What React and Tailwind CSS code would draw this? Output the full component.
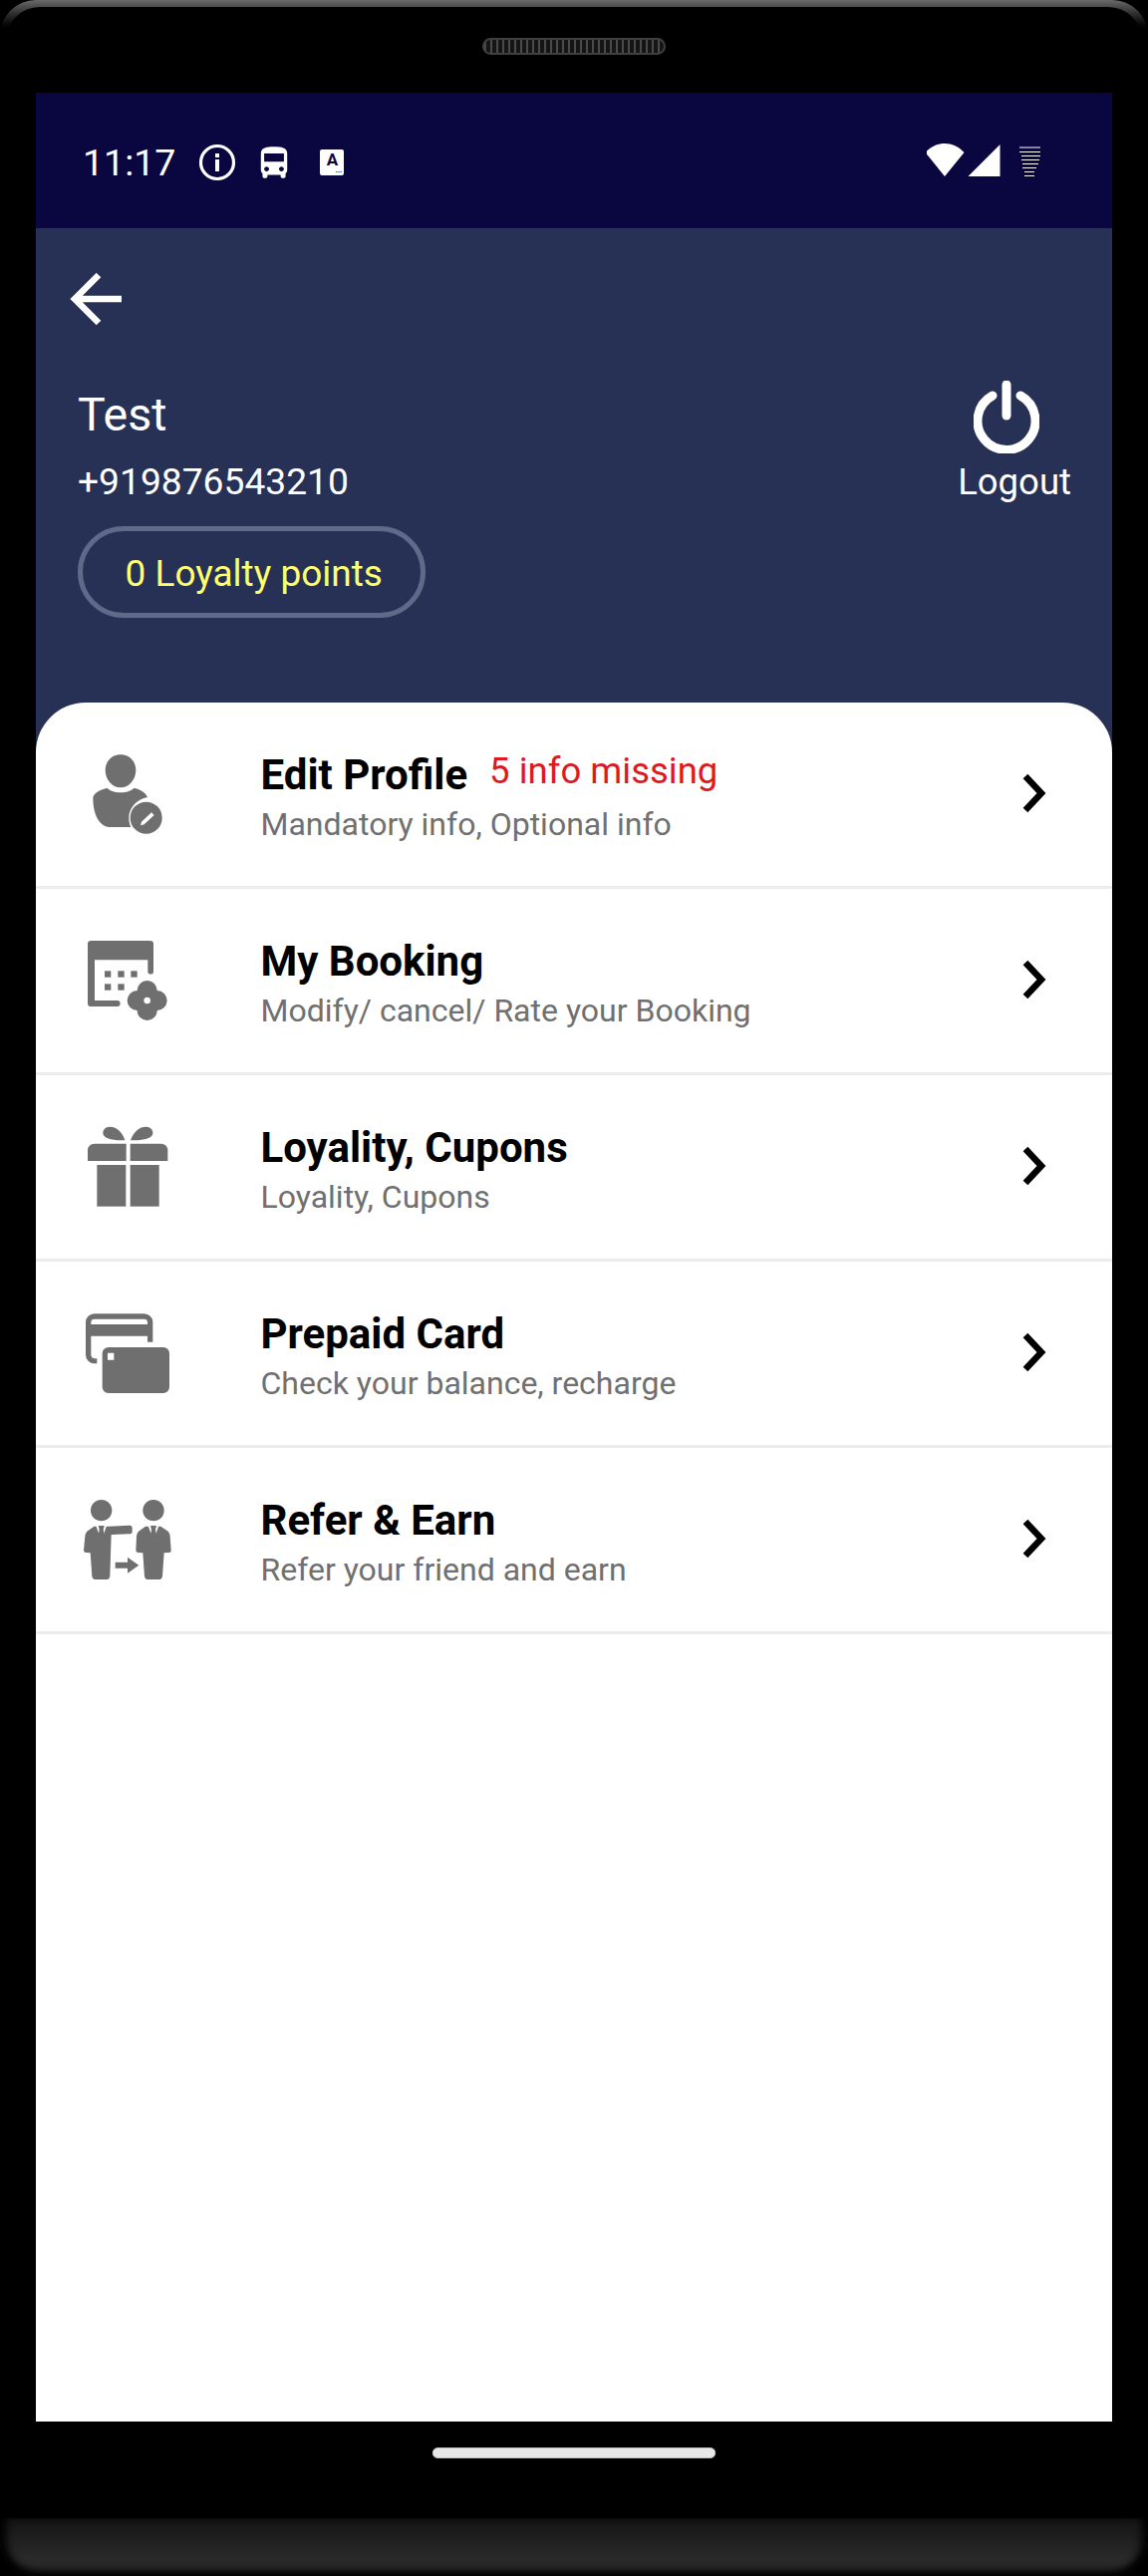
const font = { fontFamily: 'Roboto, sans-serif' };

function PersonIcon() {
  return (
    <svg width="140" height="140" viewBox="0 0 420 420" className="shrink-0">
      <g transform="translate(0 9)" fill="#6f6f6f">
        <path d="M183 82c27 0 46 20 46 47 0 27-20 52-46 52s-46-25-46-52c0-27 19-47 46-47z" />
        <path d="M100 212c2-14 16-22 42-30 8 8 24 14 41 14s33-6 41-14c20 6 34 13 40 28-30 6-56 30-56 62 0 10 2 20 6 28h-62c-30 0-52-34-52-88z" />
        <circle cx="260" cy="272" r="48" />
        <path d="M246 284l30-28 8 8-30 28-11 3z" fill="#fff" />
      </g>
    </svg>
  );
}

function CalendarIcon() {
  return (
    <svg width="140" height="140" viewBox="0 0 420 420" className="shrink-0">
      <g transform="translate(0 18)" fill="#6f6f6f">
        <path d="M94 72h178a10 10 0 0 1 10 10v82a8 8 0 0 1-17 0v-34H105v122h68a9 9 0 0 1 0 18H94a10 10 0 0 1-10-10V82a10 10 0 0 1 10-10z" />
        <rect x="135" y="163" width="19" height="19" />
        <rect x="175" y="163" width="19" height="19" />
        <rect x="214" y="163" width="19" height="19" />
        <rect x="135" y="202" width="19" height="19" />
        <rect x="175" y="202" width="19" height="19" />
        <circle cx="263" cy="222" r="30" />
        <circle cx="263" cy="282" r="30" />
        <circle cx="233" cy="252" r="30" />
        <circle cx="293" cy="252" r="30" />
        <rect x="235" y="224" width="56" height="56" />
        <circle cx="263" cy="252" r="10" fill="#fff" />
      </g>
    </svg>
  );
}

function GiftIcon() {
  return (
    <svg width="140" height="140" viewBox="0 0 420 420" className="shrink-0">
      <g transform="translate(0 27)" fill="#6f6f6f">
        <path d="M196 103C188 76 170 62 150 62C135 62 127 75 131 86C137 100 165 103 196 103z" />
        <path d="M213 103C222 76 240 62 260 62C275 62 283 75 279 86C273 100 244 103 213 103z" />
        <path d="M104 113h96v52H84v-32a20 20 0 0 1 20-20z" />
        <path d="M212 113h93a20 20 0 0 1 20 20v32H212z" />
        <rect x="112" y="177" width="87" height="125" />
        <rect x="212" y="177" width="87" height="125" />
      </g>
    </svg>
  );
}

function CardIcon() {
  return (
    <svg width="140" height="140" viewBox="0 0 420 420" className="shrink-0">
      <g transform="translate(0 36)" fill="#6f6f6f">
        <path d="M104 55h150a26 26 0 0 1 26 26v59h-16v-18H94v56a12 12 0 0 0 12 12h6v15h-8a26 26 0 0 1-26-26V81a26 26 0 0 1 26-26zM94 87h170v-6a10 10 0 0 0-10-10H104a10 10 0 0 0-10 10z" fillRule="evenodd" />
        <path d="M146 156h166a18 18 0 0 1 18 18v102a18 18 0 0 1-18 18H146a18 18 0 0 1-18-18V174a18 18 0 0 1 18-18zM144 173v21h19v-21z" fillRule="evenodd" />
      </g>
    </svg>
  );
}

function Collar({ cx }) {
  return (
    <g>
      <path d={`M${cx - 17} 121L${cx} 168L${cx + 17} 121`} fill="#fff" />
      <path d={`M${cx - 9} 123h18l-3 12 4 22-10 12-10-12 4-22z`} fill="#6f6f6f" />
    </g>
  );
}

function ReferIcon() {
  return (
    <svg width="140" height="140" viewBox="0 0 420 420" className="shrink-0">
      <g transform="translate(0 45)" fill="#6f6f6f">
        <circle cx="125" cy="77" r="32" />
        <circle cx="282" cy="77" r="32" />
        <path d="M103 125L82 140Q77 145 76 155L72 197Q72 203 78 204L92 205L97 275Q98 285 110 285H138Q150 285 151 275L155 150L210 148Q218 148 218 140V130Q218 122 210 122L148 125z" />
        <path d="M258 125L237 140Q232 145 231 155L229 197Q229 203 235 204L250 205L255 275Q256 285 268 285H296Q308 285 309 275L314 205L330 204Q336 203 335 197L332 155Q331 145 326 140L304 125z" />
        <Collar cx={125} />
        <Collar cx={282} />
        <path d="M167 233h37v-15l34 24-34 24v-15h-37z" />
      </g>
    </svg>
  );
}

const rows = [
  { title: 'Edit Profile', sub: 'Mandatory info, Optional info', Icon: PersonIcon, extra: '5 info missing' },
  { title: 'My Booking', sub: 'Modify/ cancel/ Rate your Booking', Icon: CalendarIcon },
  { title: 'Loyality, Cupons', sub: 'Loyality, Cupons', Icon: GiftIcon },
  { title: 'Prepaid Card', sub: 'Check your balance, recharge', Icon: CardIcon },
  { title: 'Refer & Earn', sub: 'Refer your friend and earn', Icon: ReferIcon },
];

function Row({ title, sub, Icon, extra }) {
  return (
    <div className="flex h-[187px] items-start border-b-[3px] border-[#ececec] pl-[24px] pr-[59px]">
      <div className="mt-[22px]">
        <Icon />
      </div>
      <div className="ml-[61.5px] mt-[49px]">
        <div className="flex h-[48px] items-end">
          <span className="text-[42px] leading-[48px] font-bold text-black">{title}</span>
          {extra && <span className="mb-[8px] ml-[22px] text-[36.5px] leading-[40px] text-[#dc1a1f]">{extra}</span>}
        </div>
        <div className="mt-[5px] text-[32px] leading-[40px] text-[#707070]">{sub}</div>
      </div>
      <svg width="40" height="48" viewBox="0 0 40 48" className="ml-auto mt-[67px] shrink-0">
        <path d="M12 7l16 17-16 17" fill="none" stroke="#000" strokeWidth="6.500" />
      </svg>
    </div>
  );
}

function StatusBar() {
  return (
    <div className="flex h-[136px] items-center bg-[#0a0640] pl-[47px] pr-[70px] pt-[3px] text-white">
      <span className="text-[37.500px] leading-[44px]">11:17</span>
      <svg width="38" height="38" viewBox="0 0 38 38" className="ml-[23px] shrink-0">
        <circle cx="19" cy="19" r="16.5" fill="none" stroke="#fff" strokeWidth="3.2" />
        <rect x="17" y="16" width="4" height="12" fill="#fff" />
        <rect x="17" y="10" width="4" height="4" fill="#fff" />
      </svg>
      <svg width="40" height="38" viewBox="0 0 24 23" className="ml-[18px] shrink-0">
        <path fill="#fff" d="M4 16c0 .88.39 1.67 1 2.22V20c0 .55.45 1 1 1h1c.55 0 1-.45 1-1v-1h8v1c0 .55.45 1 1 1h1c.55 0 1-.45 1-1v-1.78c.61-.55 1-1.34 1-2.22V6c0-3.5-3.58-4-8-4s-8 .5-8 4v10zm3.5 1c-.83 0-1.5-.67-1.5-1.5S6.67 14 7.5 14s1.500.67 1.500 1.500S8.33 17 7.5 17zm9 0c-.83 0-1.5-.67-1.5-1.5s.67-1.5 1.5-1.5 1.5.67 1.5 1.5-.67 1.5-1.5 1.5zm1.5-6H6V6h12v5z" />
      </svg>
      <div className="relative ml-[26px] flex h-[26px] w-[24px] justify-center rounded-[2px] bg-white">
        <span className="text-[17px] leading-[20px] font-bold text-[#0a0640]">A</span>
        <span className="absolute bottom-[2px] right-[2px] text-[8px] leading-[6px] font-bold text-[#0a0640]">...</span>
      </div>
      <svg width="116" height="34" viewBox="0 0 116 34" className="mb-[3px] ml-auto shrink-0">
        <path fill="#fff" d="M-1.500 9C9.500-3 26.500-3 37.500 9L18 33z" />
        <path fill="#fff" d="M41.500 33L73.500 1v32z" />
        <g stroke="#fff" strokeWidth="1.2">
          <path d="M93 4h21M93 8.500h21M95 12.500h19M95 16.500h18M96 20.500h16M96 24.500h14M98 28.500h10M98 32.500h10" />
        </g>
      </svg>
    </div>
  );
}

function Header() {
  return (
    <div className="h-[476px] pl-[42px] pr-[41px] text-white">
      <svg width="60" height="60" viewBox="0 0 60 60" className="ml-[-10px] mt-[41px]">
        <path d="M54 30H8M31 6L7 30l24 24" fill="none" stroke="#fff" strokeWidth="6.500" />
      </svg>
      <div className="mt-[61px] flex items-start justify-between">
        <div>
          <div className="text-[46.500px] leading-[50px]">Test</div>
          <div className="mt-[20px] text-[37.200px] leading-[44px]">+919876543210</div>
          <div className="mt-[23px] flex h-[92px] w-[349px] items-center rounded-full border-[5px] border-[#5f6a8a] pl-[42.500px] pt-[3px] text-[37px] leading-[44px] text-[#ffff70]">
            0 Loyalty points
          </div>
        </div>
        <div className="mt-[-9px] flex flex-col items-start">
          <svg width="66" height="73" viewBox="0 0 66 73" className="ml-[16px]">
            <path d="M19 15a29 29 0 1 0 28 0" fill="none" stroke="#fff" strokeWidth="9" strokeLinecap="round" />
            <path d="M33 4v31" fill="none" stroke="#fff" strokeWidth="9" strokeLinecap="round" />
          </svg>
          <div className="mt-[7px] text-[36.500px] leading-[44px]">Logout</div>
        </div>
      </div>
    </div>
  );
}

export default function App() {
  return (
    <div style={font} className="relative flex h-[2585px] w-[1152px] flex-col overflow-hidden bg-black">
      <div className="h-[93px] shrink-0 rounded-t-[36px] bg-gradient-to-b from-[#6a6a6a] to-black to-[35%]">
        <div className="mx-[6px] mt-[7px] flex h-[86px] justify-center rounded-t-[34px] bg-black pt-[31px]">
          <div className="h-[17px] w-[184px] rounded-full border-2 border-[#3f3f3f] bg-[repeating-linear-gradient(90deg,#4a4a4a_0,#4a4a4a_2px,#151515_2px,#151515_6px)]" />
        </div>
      </div>
      <div className="mx-[36px] flex h-[2337px] shrink-0 flex-col bg-[#273156]">
        <StatusBar />
        <Header />
        <div className="flex-1 rounded-t-[50px] bg-white">
          {rows.map((r) => (
            <Row key={r.title} {...r} />
          ))}
        </div>
      </div>
      <div className="flex h-[97px] shrink-0 justify-center pt-[26px]">
        <div className="h-[11px] w-[284px] rounded-full border-y border-[#bdbdbd] bg-[#e8e8e8]" />
      </div>
      <div className="h-[58px] shrink-0 rounded-b-[36px] bg-gradient-to-b from-[#141414] to-[#2a2a2a] to-[70%] shadow-[inset_0_-8px_8px_-3px_#000,inset_10px_0_10px_-4px_#000,inset_-10px_0_10px_-4px_#000]" />
    </div>
  );
}
